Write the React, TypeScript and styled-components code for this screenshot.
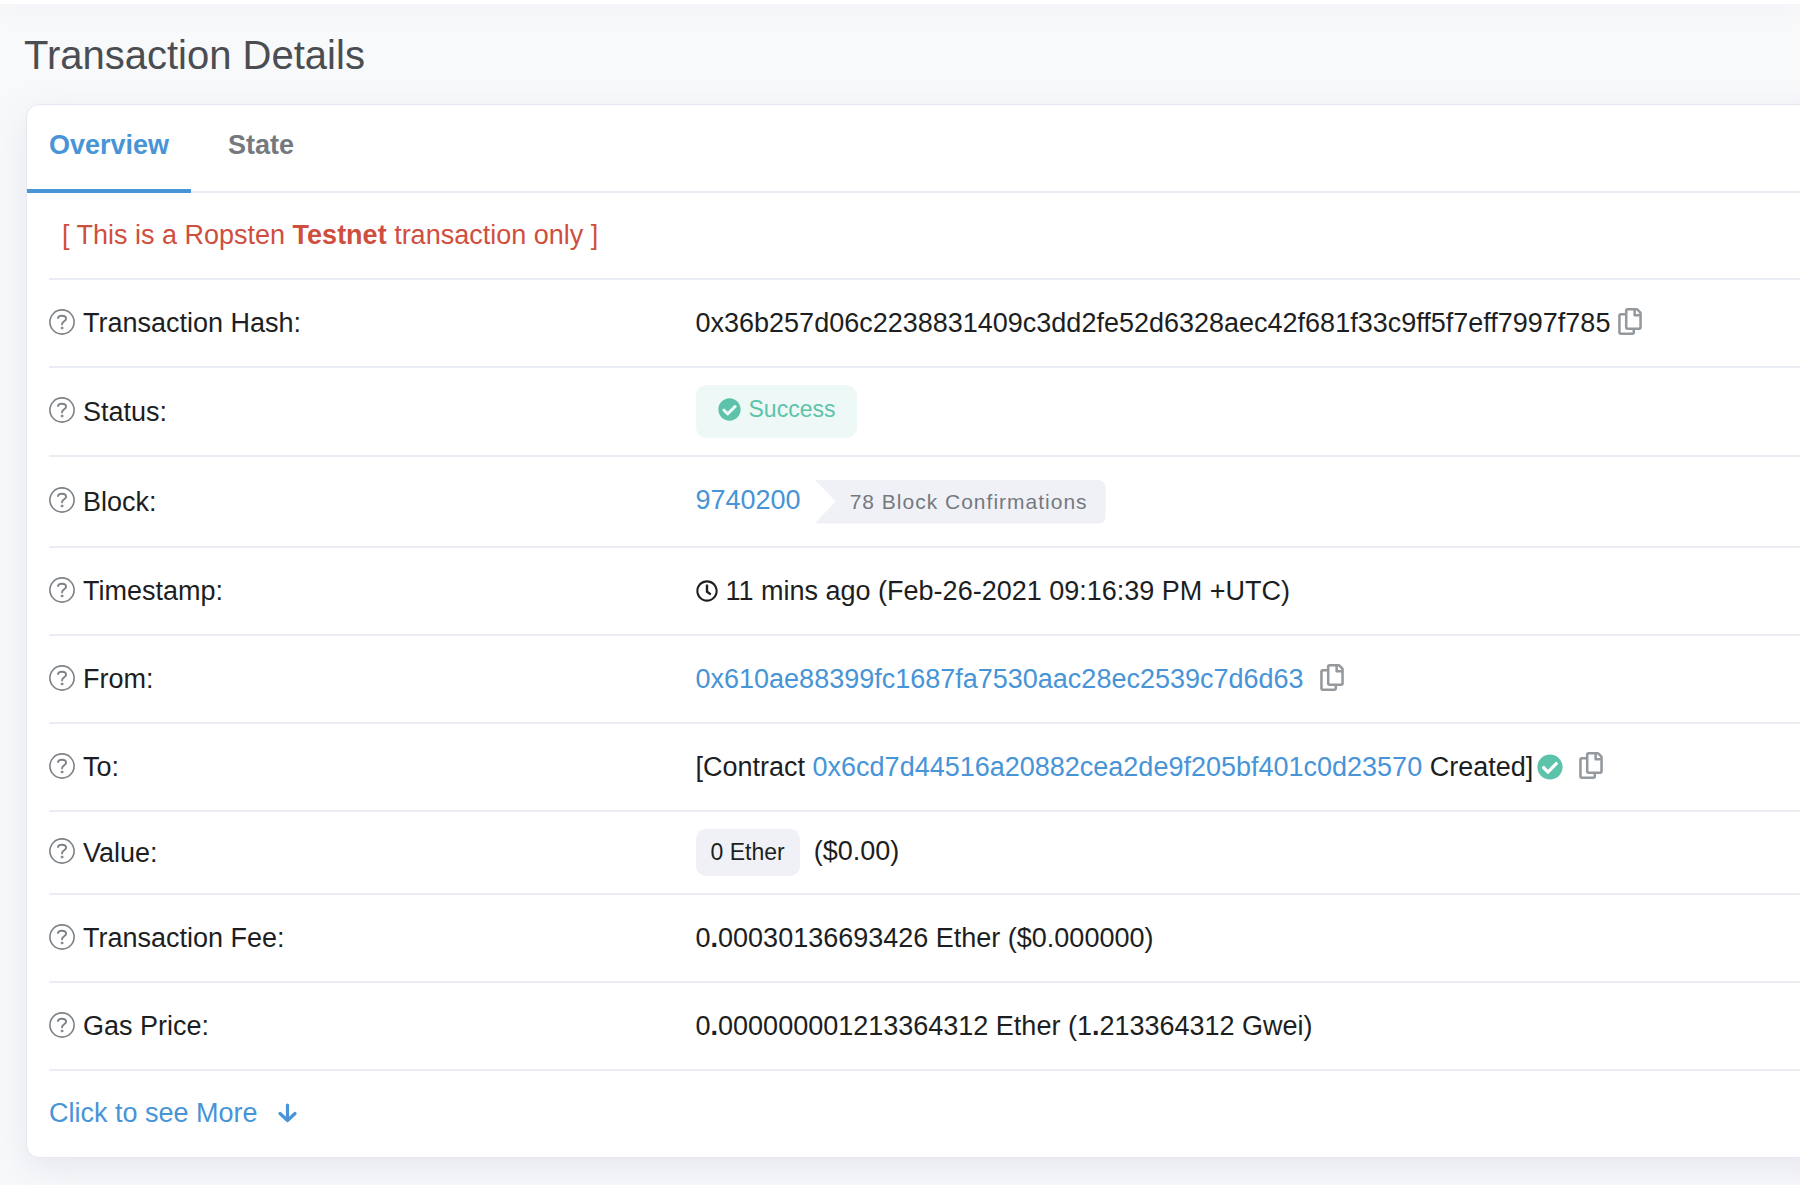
import React, { useState } from "react";
import styled, { createGlobalStyle } from "styled-components";
import { FaCheckCircle, FaRegClock, FaRegCopy } from "react-icons/fa";

const color = {
  page: "#f8f9fb",
  line: "#eaedf4",
  border: "#e5e8f1",
  ink: "#1c1e21",
  title: "#4a4d51",
  muted: "#75797e",
  icon: "#94999e",
  link: "#4794d7",
  red: "#cf4f3e",
  green: "#5cc3aa",
  greenSoft: "#eef8f6",
  graySoft: "#f0f1f6",
};

const GlobalStyle = createGlobalStyle`
  *, *::before, *::after { box-sizing: border-box; }
  body {
    margin: 0;
    background: ${color.page};
    color: ${color.ink};
    font-family: "Liberation Sans", Arial, Helvetica, sans-serif;
    font-size: 27px;
    line-height: 40px;
  }
`;

const Page = styled.div`
  overflow: hidden;
  padding-bottom: 28px;
`;

const TopBar = styled.div`
  height: 4px;
  background: #fff;
  box-shadow: 0 4px 20px rgba(140, 152, 164, 0.16);
`;

const Title = styled.h1`
  margin: 0;
  padding: 27px 24px 25px;
  color: ${color.title};
  font-size: 40px;
  font-weight: 400;
  line-height: 48px;
`;

/* The card runs past the right edge of the window, so its end stays out of view. */
const Card = styled.main`
  margin: 0 -40px 0 26px;
  padding-right: 39px;
  border: 1px solid ${color.border};
  border-radius: 13px;
  background: #fff;
  box-shadow: 0 11px 35px rgba(150, 160, 178, 0.19);
`;

const TabList = styled.div`
  display: flex;
  gap: 15px;
  border-bottom: 2px solid ${color.line};
`;

const Tab = styled.button<{ $active: boolean }>`
  margin: 0 0 -2px;
  padding: 20px 22px 24px;
  border: 0;
  border-bottom: 4px solid ${(p) => (p.$active ? color.link : "transparent")};
  background: none;
  color: ${(p) => (p.$active ? color.link : color.muted)};
  font: inherit;
  font-weight: 700;
  cursor: pointer;
`;

const Body = styled.div`
  padding-left: 22px;
`;

const Notice = styled.p`
  margin: 0;
  padding: 22px 13px 23px;
  border-bottom: 2px solid ${color.line};
  color: ${color.red};
`;

const List = styled.dl`
  margin: 0;
`;

const rowHeights = { compact: 83, regular: 88, medium: 89, tall: 91 };

const Row = styled.div<{ $size?: keyof typeof rowHeights }>`
  display: grid;
  grid-template-columns: minmax(0, 24fr) minmax(0, 41fr);
  align-items: center;
  min-height: ${(p) => rowHeights[p.$size ?? "regular"]}px;
  padding: 16px 0;
  border-bottom: 2px solid ${color.line};
`;

const Label = styled.dt`
  display: flex;
  align-items: center;
  gap: 8px;
`;

const Value = styled.dd<{ $gap?: number }>`
  display: flex;
  align-items: center;
  gap: ${(p) => p.$gap ?? 8}px;
  margin: 0;
  white-space: nowrap;
`;

const IconButton = styled.button`
  display: flex;
  flex: none;
  padding: 0 0 3px;
  border: 0;
  background: none;
  color: ${color.icon};
  cursor: pointer;
`;

const CopyGlyph = styled(FaRegCopy)`
  width: 24px;
  height: 27px;
`;

const HelpGlyph = styled.svg`
  width: 26px;
  height: 26px;
  fill: none;
  stroke: #7d8287;
  stroke-linecap: round;
`;

const Link = styled.a`
  color: ${color.link};
  text-decoration: none;
`;

const Raised = styled.span`
  padding-bottom: 4px;
`;

const SuccessPill = styled.span`
  display: flex;
  align-items: center;
  gap: 8px;
  padding: 4px 22px 9px;
  border-radius: 11px;
  background: ${color.greenSoft};
  color: ${color.green};
  font-size: 23px;
`;

const GrayPill = styled.span`
  padding: 3px 15px 4px;
  border-radius: 10px;
  background: ${color.graySoft};
  font-size: 23px;
`;

const Confirmations = styled.span`
  padding: 2px 18px 2px 35px;
  border-radius: 0 8px 8px 0;
  background: ${color.graySoft};
  color: ${color.muted};
  font-size: 21px;
  letter-spacing: 1px;
  clip-path: polygon(0 0, 100% 0, 100% 100%, 0 100%, 21px 50%);
`;

const Verified = styled(FaCheckCircle)`
  flex: none;
  width: 26px;
  height: 26px;
  color: ${color.green};
`;

const More = styled.button`
  display: flex;
  align-items: center;
  gap: 20px;
  padding: 22px 0 24px;
  border: 0;
  background: none;
  color: ${color.link};
  font: inherit;
  cursor: pointer;
`;

const Group = styled.span`
  display: flex;
  align-items: center;
  gap: 4px;
`;

function Help({ topic }: { topic: string }) {
  return (
    <IconButton type="button" aria-label={`About ${topic}`}>
      <HelpGlyph viewBox="0 0 26 26" aria-hidden="true">
        <circle cx="13" cy="13" r="12.1" strokeWidth="1.6" />
        <path d="M9 9C9.3 7.6 10.9 6.8 12.8 6.8C15.3 6.8 17.1 7.9 17.1 9.8C17.1 12.4 13 12.3 13 15.4" strokeWidth="1.9" />
        <circle cx="13" cy="19" r="1.1" fill="#7d8287" strokeWidth="0.6" />
      </HelpGlyph>
    </IconButton>
  );
}

function Copy({ what }: { what: string }) {
  return (
    <IconButton type="button" aria-label={`Copy ${what}`}>
      <CopyGlyph />
    </IconButton>
  );
}

type FieldProps = {
  name: string;
  size?: keyof typeof rowHeights;
  gap?: number;
  children: React.ReactNode;
};

function Field({ name, size, gap, children }: FieldProps) {
  return (
    <Row $size={size}>
      <Label>
        <Help topic={name} />
        {name}:
      </Label>
      <Value $gap={gap}>{children}</Value>
    </Row>
  );
}

export default function App() {
  const [tab, setTab] = useState("Overview");
  return (
    <Page>
      <GlobalStyle />
      <TopBar />
      <Title>Transaction Details</Title>
      <Card>
        <TabList role="tablist">
          {["Overview", "State"].map((name) => (
            <Tab
              key={name}
              type="button"
              role="tab"
              aria-selected={tab === name}
              $active={tab === name}
              onClick={() => setTab(name)}
            >
              {name}
            </Tab>
          ))}
        </TabList>
        <Body>
          <Notice>
            [ This is a Ropsten <strong>Testnet</strong> transaction only ]
          </Notice>
          <List>
            <Field name="Transaction Hash" gap={8}>
              <span>0x36b257d06c2238831409c3dd2fe52d6328aec42f681f33c9ff5f7eff7997f785</span>
              <Copy what="transaction hash" />
            </Field>
            <Field name="Status" size="medium">
              <SuccessPill>
                <FaCheckCircle />
                Success
              </SuccessPill>
            </Field>
            <Field name="Block" size="tall" gap={14}>
              <Raised>
                <Link href="#block">9740200</Link>
              </Raised>
              <Confirmations>78 Block Confirmations</Confirmations>
            </Field>
            <Field name="Timestamp">
              <FaRegClock size={22} />
              <span>11 mins ago (Feb-26-2021 09:16:39 PM +UTC)</span>
            </Field>
            <Field name="From" gap={16}>
              <Link href="#from">0x610ae88399fc1687fa7530aac28ec2539c7d6d63</Link>
              <Copy what="sender address" />
            </Field>
            <Field name="To" gap={16}>
              <Group>
                <span>
                  [Contract <Link href="#contract">0x6cd7d44516a20882cea2de9f205bf401c0d23570</Link> Created]
                </span>
                <Verified />
              </Group>
              <Copy what="contract address" />
            </Field>
            <Field name="Value" size="compact" gap={14}>
              <GrayPill>0 Ether</GrayPill>
              <Raised>($0.00)</Raised>
            </Field>
            <Field name="Transaction Fee">
              <span>
                0<b>.</b>00030136693426 Ether ($0.000000)
              </span>
            </Field>
            <Field name="Gas Price">
              <span>
                0<b>.</b>000000001213364312 Ether (1<b>.</b>213364312 Gwei)
              </span>
            </Field>
          </List>
          <More type="button">
            Click to see More
            <svg width="19" height="20" viewBox="0 0 19 20" fill="none" stroke="currentColor" strokeWidth="3.2" strokeLinecap="round" strokeLinejoin="round" aria-hidden="true">
              <path d="M9.5 2V17.5M2 10.5L9.5 17.5L17 10.5" />
            </svg>
          </More>
        </Body>
      </Card>
    </Page>
  );
}
